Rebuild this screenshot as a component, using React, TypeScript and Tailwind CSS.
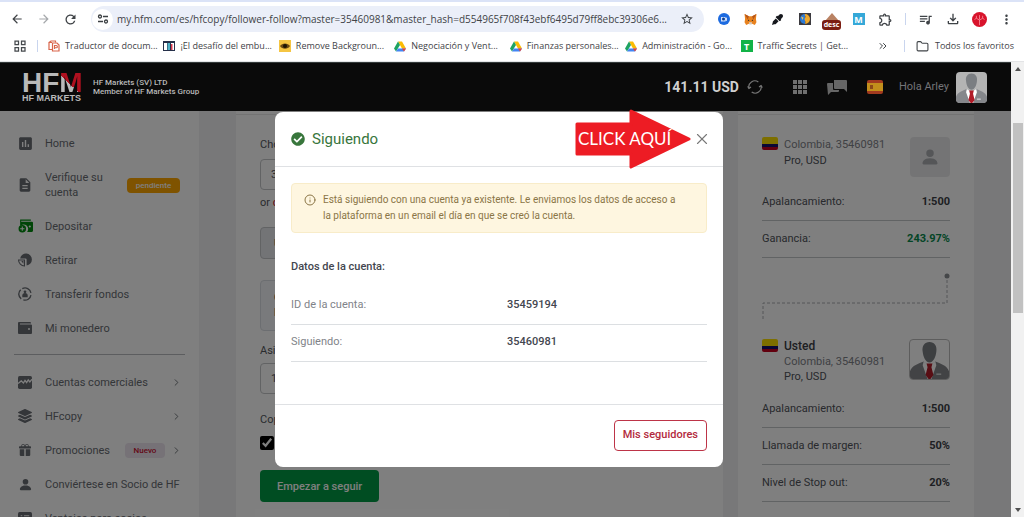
import type { ReactNode } from 'react'
import { ChevronRight, ChevronsRight, Folder, Info, X } from 'lucide-react'
import { BsGiftFill, BsPersonFill } from 'react-icons/bs'
import { FaCheckCircle, FaEyeDropper, FaLayerGroup } from 'react-icons/fa'
import {
  MdArrowBack,
  MdArrowForward,
  MdAssessment,
  MdDescription,
  MdMoreVert,
  MdOutlineExtension,
  MdOutlineFileDownload,
  MdQueueMusic,
  MdRefresh,
  MdStarBorder,
} from 'react-icons/md'

/* ---------- browser icons ---------- */

function DriveIcon() {
  return (
    <svg viewBox="0 0 24 22" className="h-[11px] w-3">
      <path d="M8 1h8l8 14h-8z" fill="#fbbc04" />
      <path d="M8 1 0 15l4 6 8-13z" fill="#1ea362" />
      <path d="M4 21h16l4-6H8z" fill="#4285f4" />
      <path d="M16 15h8l-4 6z" fill="#ea4335" />
    </svg>
  )
}

function TranslatorIcon() {
  return (
    <svg viewBox="0 0 24 24" className="size-3" fill="none" stroke="#d9654a" strokeWidth="2.4">
      <path d="M8 5H2v14h6M2 5l4-3h9v3" />
      <path d="M9 6h9l4 4v12H9z" />
      <path d="M13 18v-7h3.500a2 2 0 0 1 0 4.500H13" />
    </svg>
  )
}

function FlagBookIcon() {
  return (
    <svg viewBox="0 0 24 20" className="h-[10px] w-3">
      <path d="M0 0h24v20H0z" fill="#26304a" />
      <path d="M2 4h6v14H2z" fill="#fff" />
      <path d="M9 4h5v14H9z" fill="#4fb3c8" />
      <path d="M16 4h6v14h-6z" fill="#fff" />
      <path d="M16 6h3v12h-3z" fill="#d8364a" />
    </svg>
  )
}

function EyeIcon() {
  return (
    <svg viewBox="0 0 24 24" className="size-3">
      <path d="M0 0h24v24H0z" fill="#f5c542" />
      <path d="M2 12c4-7 16-7 20 0-4 7-16 7-20 0z" fill="#6b4a12" />
      <circle cx="12" cy="12" r="4" fill="#1c1403" />
    </svg>
  )
}

function GreenTIcon() {
  return (
    <span className="flex size-3 items-center justify-center bg-[#12b347] text-[9px] leading-none font-bold text-white">T</span>
  )
}

function TuneIcon() {
  return (
    <svg viewBox="0 0 24 24" className="size-3" fill="none" stroke="#3c4043" strokeWidth="2.600">
      <circle cx="6" cy="7" r="3" />
      <path d="M12 7h10M2 17h10" />
      <circle cx="18" cy="17" r="3" />
    </svg>
  )
}

function AppsIcon() {
  return (
    <svg viewBox="0 0 24 24" className="size-3" fill="none" stroke="#45494d" strokeWidth="2.500">
      <path d="M2 2h7v7H2zM15 2h7v7h-7zM2 15h7v7H2zM15 15h7v7h-7z" />
    </svg>
  )
}

function FoxIcon() {
  return (
    <svg viewBox="0 0 24 24" className="size-[13px]">
      <path d="M1 2l8 4h6l8-4-1 9 1 6-3 5-5-2h-6l-5 2-3-5 1-6z" fill="#e8821e" />
      <path d="M1 2l8 4-2 6zM23 2l-8 4 2 6z" fill="#b4541a" />
      <path d="M8 12l2 2-3 1zM16 12l-2 2 3 1z" fill="#2b2b2b" />
      <path d="M9 17h6l-1 4h-4z" fill="#d9cbbd" />
    </svg>
  )
}

function CameraIcon() {
  return (
    <svg viewBox="0 0 24 24" className="size-3">
      <circle cx="12" cy="12" r="12" fill="#1d6be0" />
      <path d="M6 8h9v2l3-1v7l-3-1v2H6z" fill="#cfe0fb" />
      <circle cx="11" cy="12" r="3" fill="#0e3f94" />
    </svg>
  )
}

function GlobeIcon() {
  return (
    <svg viewBox="0 0 24 24" className="size-3">
      <path d="M0 0h24v24H0z" fill="#3b3a3f" />
      <path d="M12 2a10 10 0 0 0 0 20z" fill="#2c7ad6" />
      <path d="M12 2a10 10 0 0 1 0 20c3-6-3-8 0-12s-2-5 0-8z" fill="#f0a92c" />
      <path d="M4 7l5 2-2 5z" fill="#e9c45a" />
    </svg>
  )
}

function DescIcon() {
  return (
    <span className="flex w-[19px] flex-col items-center pt-1">
      <svg viewBox="0 0 18 8" className="h-[7px] w-4">
        <path d="M9 0l7 8H2z" fill="#b98263" />
      </svg>
      <span className="w-full rounded-[3px] bg-[#7b1d12] text-center text-[7px] leading-[10px] font-bold text-white">desc</span>
    </span>
  )
}

function MIcon() {
  return (
    <span className="flex size-3 items-center justify-center bg-[#35a8d8] text-[9px] leading-none font-bold text-white">M</span>
  )
}

function ProfileIcon() {
  return (
    <svg viewBox="0 0 24 24" className="size-[15px]">
      <circle cx="12" cy="12" r="12" fill="#d8142c" />
      <path
        d="M12 21v-8M12 13l-5-3M12 13l5-3M12 12V5M7 10l-3 2M7 10V6M17 10l3 2M17 10V6"
        fill="none"
        stroke="#ff9aa6"
        strokeWidth="1.200"
      />
    </svg>
  )
}

const EXTENSIONS = [
  { name: 'Grabadora', icon: <CameraIcon /> },
  { name: 'MetaMask', icon: <FoxIcon /> },
  { name: 'Selector de color', icon: <FaEyeDropper className="size-[11px] text-[#16181d]" /> },
  { name: 'Traductor', icon: <GlobeIcon /> },
  { name: 'Descuentos', icon: <DescIcon /> },
  { name: 'Mail', icon: <MIcon /> },
  { name: 'Extensiones', icon: <MdOutlineExtension className="size-[15px]" /> },
]

const BOOKMARKS = [
  { label: 'Traductor de docum...', icon: <TranslatorIcon /> },
  { label: '¡El desafío del embu...', icon: <FlagBookIcon /> },
  { label: 'Remove Backgroun...', icon: <EyeIcon /> },
  { label: 'Negociación y Vent...', icon: <DriveIcon /> },
  { label: 'Finanzas personales...', icon: <DriveIcon /> },
  { label: 'Administración - Go...', icon: <DriveIcon /> },
  { label: 'Traffic Secrets | Get...', icon: <GreenTIcon /> },
]

function ToolButton({ label, children }: { label: string; children: ReactNode }) {
  return (
    <button type="button" aria-label={label} className="flex h-6 w-[27px] shrink-0 items-center justify-center">
      {children}
    </button>
  )
}

function BrowserBar() {
  return (
    <div className="shrink-0 border-t-2 border-b border-t-[#dbe3f7] border-b-[#e3e4e6] bg-white font-['Open_Sans','Noto_Sans',sans-serif] text-[#3f4347]">
      <div className="flex h-[34px] items-center pr-1 pl-[3px]">
        <ToolButton label="Atrás">
          <MdArrowBack className="size-[14px]" />
        </ToolButton>
        <ToolButton label="Adelante">
          <MdArrowForward className="size-[14px] text-[#a5a8ab]" />
        </ToolButton>
        <ToolButton label="Recargar">
          <MdRefresh className="size-[15px]" />
        </ToolButton>
        <div className="ml-[7px] flex h-[26px] min-w-0 flex-1 items-center rounded-full bg-[#ebeff9] pr-1 pl-px">
          <button type="button" aria-label="Información del sitio" className="flex size-[21px] items-center justify-center rounded-full bg-white">
            <TuneIcon />
          </button>
          <input
            aria-label="Dirección"
            readOnly
            className="ml-1 min-w-0 flex-1 bg-transparent text-[10px] outline-none"
            defaultValue="my.hfm.com/es/hfcopy/follower-follow?master=35460981&master_hash=d554965f708f43ebf6495d79ff8ebc39306e6..."
          />
          <ToolButton label="Añadir a favoritos">
            <MdStarBorder className="size-[14px]" />
          </ToolButton>
        </div>
        <div className="ml-[6px] flex items-center">
          {EXTENSIONS.map((ext) => (
            <ToolButton key={ext.name} label={ext.name}>
              {ext.icon}
            </ToolButton>
          ))}
        </div>
        <span className="mx-[6px] h-3 w-px bg-[#c9d5ee]" />
        <ToolButton label="Multimedia">
          <MdQueueMusic className="size-[15px]" />
        </ToolButton>
        <ToolButton label="Descargas">
          <MdOutlineFileDownload className="size-4" />
        </ToolButton>
        <ToolButton label="Perfil">
          <ProfileIcon />
        </ToolButton>
        <ToolButton label="Menú">
          <MdMoreVert className="size-[15px]" />
        </ToolButton>
      </div>

      <div className="flex h-[25px] items-center pb-[5px] pl-[14px] text-[9px]">
        <AppsIcon />
        <span className="mr-[10px] ml-[11px] h-3 w-px bg-[#c9d5ee]" />
        <div className="grid w-[808px] grid-cols-7">
          {BOOKMARKS.map((item) => (
            <a key={item.label} href="#" className="flex items-center gap-[5px] whitespace-nowrap">
              {item.icon}
              {item.label}
            </a>
          ))}
        </div>
        <div className="ml-auto flex items-center pr-[10px] whitespace-nowrap">
          <ChevronsRight className="mr-1 size-3" />
          <span className="mr-[11px] ml-[11px] h-3 w-px bg-[#c9d5ee]" />
          <a href="#" className="flex items-center gap-[6px]">
            <Folder className="size-[13px]" />
            Todos los favoritos
          </a>
        </div>
      </div>
    </div>
  )
}

/* ---------- site pieces ---------- */

function SuitAvatar() {
  return (
    <svg viewBox="0 0 40 40" className="size-full">
      <path d="M0 40V32c2-6 9-8 14-10l6 5 6-5c5 2 12 4 14 10v8z" fill="#85878b" />
      <path d="M14 22l6 4 6-4 1 4-5 14h-4l-5-14z" fill="#fff" />
      <path d="M17 24h6l-1 4 2 8-3 4h-2l-3-4 2-8z" fill="#b11c28" />
      <path d="M20 2c5 0 8 4 7 10-.5 5-3 11-7 11s-6.500-6-7-11c-1-6 2-10 7-10z" fill="#7b7e82" />
      <path d="M27 35h5" stroke="#fff" strokeWidth="1" />
    </svg>
  )
}

function ColombiaFlag() {
  return (
    <svg viewBox="0 0 16 13" className="h-[13px] w-4 shrink-0">
      <path d="M0 2a2 2 0 0 1 2-2h12a2 2 0 0 1 2 2v5H0z" fill="#fbdf00" />
      <path d="M0 7h16v3H0z" fill="#14106b" />
      <path d="M0 10h16v1a2 2 0 0 1-2 2H2a2 2 0 0 1-2-2z" fill="#c4001f" />
    </svg>
  )
}

function SiteHeader() {
  return (
    <header className="flex h-[49px] shrink-0 items-center border-t border-[#343a3a] bg-[#0a0a0a] pr-[24px] pl-[22px] text-[#b9b9b9]">
      <a href="#" className="w-[62px] font-['Liberation_Sans',sans-serif] font-bold whitespace-nowrap">
        <span className="flex text-[28px] leading-[22px]">
          <span>HF</span>
          <span className="bg-linear-to-tr from-[#b9b9b9] from-45% to-[#b0101f] to-45% bg-clip-text text-transparent">M</span>
        </span>
        <span className="block text-[9px] leading-[9px]">HF MARKETS</span>
      </a>
      <p className="ml-[9px] text-[8px] leading-[9px] font-medium">
        HF Markets (SV) LTD
        <br />
        Member of HF Markets Group
      </p>
      <p className="ml-auto text-[14px] font-bold text-[#d0d0d0]">141.11 USD</p>
      <button type="button" aria-label="Actualizar saldo" className="ml-[8px]">
        <svg viewBox="0 0 24 24" className="size-4" fill="none" stroke="#777" strokeWidth="1.800">
          <path d="M3 14a9 9 0 0 1 14-9.500M21 10a9 9 0 0 1-14 9.500" />
          <path d="M1 11l2 3 3-2M23 13l-2-3-3 2" />
        </svg>
      </button>
      <button type="button" aria-label="Aplicaciones" className="ml-[30px]">
        <svg viewBox="0 0 14 14" className="size-[14px]" fill="#6f6f6f">
          <path d="M0 0h4v4H0zM5 0h4v4H5zM10 0h4v4h-4zM0 5h4v4H0zM5 5h4v4H5zM10 5h4v4h-4zM0 10h4v4H0zM5 10h4v4H5zM10 10h4v4h-4z" />
        </svg>
      </button>
      <button type="button" aria-label="Chat" className="ml-[20px]">
        <svg viewBox="0 0 20 15" className="h-[15px] w-5" fill="#666">
          <path d="M7 0h12a1 1 0 0 1 1 1v11l-3-3H8a1 1 0 0 1-1-1z" />
          <path d="M0 4a1 1 0 0 1 1-1h5v6a1 1 0 0 0 1 1h5v1a1 1 0 0 1-1 1H4l-3 3z" />
        </svg>
      </button>
      <button type="button" aria-label="Idioma" className="ml-[20px]">
        <svg viewBox="0 0 16 14" className="h-[14px] w-4">
          <rect width="16" height="14" rx="2" fill="#a23a1f" />
          <path d="M0 3h16v8H0z" fill="#c28f1c" />
          <path d="M3 5h3v4H3z" fill="#8d4a1a" />
        </svg>
      </button>
      <span className="ml-[16px] text-[11px] text-[#747478]">Hola Arley</span>
      <span className="ml-[7px] size-[31px] overflow-hidden rounded-[4px] bg-[#b4b4b4]">
        <SuitAvatar />
      </span>
    </header>
  )
}

function DepositIcon() {
  return (
    <svg viewBox="0 0 28 26" className="h-[14px] w-[15px] text-[#008a0e]" fill="currentColor">
      <path d="M4 1h20v2H6v2h20a2 2 0 0 1 2 2v15a2 2 0 0 1-2 2H17a8.500 8.500 0 0 0-13-11V3z" />
      <circle cx="22" cy="14" r="2" fill="#fff" />
      <path fillRule="evenodd" d="M8 11a7 7 0 1 1 0 14 7 7 0 0 1 0-14zm-1 3v3H4v2h3v3h2v-3h3v-2H9v-3z" />
    </svg>
  )
}

function WithdrawIcon() {
  return (
    <svg viewBox="0 0 26 26" className="size-[14px]" fill="currentColor">
      <path d="M4 10A11 11 0 1 1 16 23V12a2 2 0 0 0-2-2z" />
      <path d="M1 13h11v11C6 24 1 19 1 13z" fill="none" stroke="currentColor" strokeWidth="2" />
      <path d="M6 15h4v5z" />
    </svg>
  )
}

function TransferIcon() {
  return (
    <svg viewBox="0 0 26 26" className="size-[14px]" fill="none" stroke="currentColor" strokeWidth="2.500">
      <path d="M8 3a11 11 0 0 1 16 8M24 15a11 11 0 0 1-14 9M6 22A11 11 0 0 1 5 5" />
      <circle cx="13" cy="9" r="2.500" fill="currentColor" stroke="none" />
      <path d="M8 19v-3a5 5 0 0 1 10 0v3z" fill="currentColor" stroke="none" />
    </svg>
  )
}

function WalletIcon() {
  return (
    <svg viewBox="0 0 28 24" className="h-3 w-[14px]" fill="currentColor">
      <path d="M2 0h22a2 2 0 0 1 2 2v1H4v2h22a2 2 0 0 1 2 2v15a2 2 0 0 1-2 2H2a2 2 0 0 1-2-2V2a2 2 0 0 1 2-2z" />
      <circle cx="22" cy="14" r="2" fill="#fff" />
    </svg>
  )
}

function AccountsIcon() {
  return (
    <svg viewBox="0 0 26 24" className="h-[13px] w-[14px]">
      <rect width="26" height="24" rx="3" fill="currentColor" />
      <path d="M0 14l6-5 4 4 3-5 3 4 3-5 3 4 4-5" fill="none" stroke="#fff" strokeWidth="2.400" />
    </svg>
  )
}

function ListIcon() {
  return (
    <svg viewBox="0 0 26 24" className="h-[13px] w-[14px]">
      <rect width="26" height="24" rx="3" fill="currentColor" />
      <path d="M5 7h3M11 7h10M5 12h3M11 12h10M5 17h3M11 17h10" stroke="#fff" strokeWidth="2" />
    </svg>
  )
}

type NavItem = { label: string; icon: ReactNode; badge?: ReactNode; arrow?: boolean }

const ACCOUNT_NAV: NavItem[] = [
  { label: 'Home', icon: <MdAssessment className="size-[17px]" /> },
  {
    label: 'Verifique su cuenta',
    icon: <MdDescription className="size-4" />,
    badge: <span className="w-[53px] rounded-[4px] bg-[#ffa600] text-center text-[8px] leading-[15px] font-medium text-white">pendiente</span>,
  },
  { label: 'Depositar', icon: <DepositIcon /> },
  { label: 'Retirar', icon: <WithdrawIcon /> },
  { label: 'Transferir fondos', icon: <TransferIcon /> },
  { label: 'Mi monedero', icon: <WalletIcon /> },
]

const SERVICES_NAV: NavItem[] = [
  { label: 'Cuentas comerciales', icon: <AccountsIcon />, arrow: true },
  { label: 'HFcopy', icon: <FaLayerGroup className="size-[14px]" />, arrow: true },
  {
    label: 'Promociones',
    icon: <BsGiftFill className="size-3" />,
    badge: <span className="mr-[6px] w-10 rounded-[4px] bg-[#ece4ee] text-center text-[8px] leading-[15px] font-medium text-[#c8102e]">Nuevo</span>,
    arrow: true,
  },
  { label: 'Conviértese en Socio de HF', icon: <BsPersonFill className="size-[15px]" /> },
  { label: 'Ventajas para socios', icon: <ListIcon /> },
]

function NavList({ items }: { items: NavItem[] }) {
  return (
    <ul>
      {items.map((item) => (
        <li key={item.label}>
          <a href="#" className="flex min-h-[34px] items-center py-[9px] text-[11px] leading-[15px]">
            <span className="flex w-[31px] shrink-0 justify-center pr-[9px]">{item.icon}</span>
            <span className={item.arrow || item.badge ? 'min-w-0 flex-1 pr-4' : 'whitespace-nowrap'}>{item.label}</span>
            {item.badge}
            {item.arrow && <ChevronRight className="mr-[2px] size-[11px]" />}
          </a>
        </li>
      ))}
    </ul>
  )
}

function Sidebar() {
  return (
    <nav className="w-[199px] shrink-0 bg-white px-[14px] pt-[15px] text-[#686c72]">
      <div className="pr-[5px]">
        <NavList items={ACCOUNT_NAV} />
      </div>
      <hr className="mt-[9px] mb-[10px] border-[#b9bbbe]" />
      <div className="pr-[1px]">
        <NavList items={SERVICES_NAV} />
      </div>
    </nav>
  )
}

function FollowForm() {
  return (
    <form className="min-w-0 flex-1 bg-white px-6 text-[11px] leading-[15px] text-[#55585d]">
      <div className="-mx-6 mb-[22px] h-1 border-b border-[#e6e6e6]" />
      <label htmlFor="account" className="block">
        Choose
      </label>
      <select id="account" className="mt-[7px] block h-[31px] w-full appearance-none rounded-[4px] border border-[#c4c6c9] px-[10px]">
        <option>35459194</option>
      </select>
      <p className="mt-[5px]">
        or{' '}
        <a href="#" className="text-[#c8102e]">
          create
        </a>
      </p>
      <div className="mt-[17px] flex h-8 items-center rounded-[4px] border border-[#c4c6c9] bg-[#e6e8ec] px-[13px] font-bold">Usted</div>
      <div className="mt-[21px] h-[51px] rounded-[4px] border border-[#d8dce3] bg-[#f3f5f8] px-[13px] py-[9px] font-bold">
        Copia
        <br />
        Proporcional
      </div>
      <label htmlFor="ratio" className="mt-[12px] block">
        Asignar
      </label>
      <select id="ratio" className="mt-[5px] block h-[31px] w-full appearance-none rounded-[4px] border border-[#c4c6c9] px-[10px]">
        <option>100%</option>
      </select>
      <label htmlFor="copy" className="mt-[18px] block">
        Copiar
      </label>
      <input id="copy" type="checkbox" defaultChecked className="mt-[9px] block size-[14px] accent-black" />
      <button type="button" className="mt-[20px] h-8 rounded-[4px] bg-[#009a44] px-[17px] font-medium text-white">
        Empezar a seguir
      </button>
    </form>
  )
}

function StatRow({ label, value, green }: { label: string; value: string; green?: boolean }) {
  return (
    <div className="mb-[3px] flex h-[34px] items-start justify-between border-b border-[#c3c6c9] pt-[7px]">
      <dt>{label}</dt>
      <dd className={green ? 'font-bold text-[#068a4c]' : 'font-bold text-[#3c3e46]'}>{value}</dd>
    </div>
  )
}

function MasterCard() {
  return (
    <aside className="w-[236px] shrink-0 bg-white px-6 text-[11px] leading-[15px] text-[#50535a]">
      <div className="-mx-6 mb-[22px] h-1 border-b border-[#e6e6e6]" />
      <div className="flex">
        <ColombiaFlag />
        <p className="ml-[6px] flex-1 leading-4">
          <span className="text-[#7e8288]">Colombia, 35460981</span>
          <br />
          Pro, USD
        </p>
        <span className="flex size-10 items-center justify-center rounded-[4px] bg-[#e9e9eb] text-[#aaadb1]">
          <BsPersonFill className="size-5" />
        </span>
      </div>
      <dl className="mt-[10px]">
        <StatRow label="Apalancamiento:" value="1:500" />
        <StatRow label="Ganancia:" value="243.97%" green />
      </dl>
      <svg viewBox="0 0 188 52" className="mt-[14px] block h-[52px] w-full" fill="none" stroke="#a9acb0">
        <circle cx="185" cy="4" r="2.500" fill="#8b8e92" stroke="none" />
        <path d="M185 8v23H1v17" strokeDasharray="3 2" />
      </svg>
      <div className="mt-[15px] flex">
        <ColombiaFlag />
        <p className="ml-[6px] flex-1">
          <strong className="text-[12px] font-medium text-[#3c3e46]">Usted</strong>
          <br />
          <span className="text-[#7e8288]">Colombia, 35460981</span>
          <br />
          Pro, USD
        </p>
        <span className="size-[41px] overflow-hidden rounded-[4px] border border-[#bbb]">
          <SuitAvatar />
        </span>
      </div>
      <dl className="mt-[10px]">
        <StatRow label="Apalancamiento:" value="1:500" />
        <StatRow label="Llamada de margen:" value="50%" />
        <StatRow label="Nivel de Stop out:" value="20%" />
      </dl>
    </aside>
  )
}

function ClickHere() {
  return (
    <div className="absolute -top-[3px] right-8 h-[60px] w-[117px]">
      <svg viewBox="0 0 117 60" className="size-full">
        <path
          d="M3 15h54V2l58 28-58 28V45H3z"
          fill="#ed1c24"
          stroke="#ed1c24"
          strokeWidth="3"
          strokeLinejoin="round"
        />
      </svg>
      <span className="absolute inset-y-0 left-1 flex items-center font-['Lato',sans-serif] text-[17px] whitespace-nowrap text-white">
        CLICK AQUÍ
      </span>
    </div>
  )
}

function FollowingDialog() {
  return (
    <div role="dialog" aria-labelledby="dialog-title" className="relative w-[448px] rounded-[8px] bg-white">
      <div className="flex h-[55px] items-center border-b border-[#dfe1e4] px-4">
        <FaCheckCircle className="size-[14px] text-[#38763c]" />
        <h2 id="dialog-title" className="ml-[7px] text-[15px] text-[#38763c]">
          Siguiendo
        </h2>
        <button type="button" aria-label="Cerrar" className="ml-auto text-[#777]">
          <X className="-mr-1 size-[18px]" strokeWidth={1.5} />
        </button>
      </div>
      <div className="px-4 pt-4 pb-[42px] text-[11px]">
        <div className="flex rounded-[4px] border border-[#f8ecc9] bg-[#fef6e0] py-2 pr-6 pl-3 text-[10px] leading-4 text-[#8a7546]">
          <Info className="mt-[2px] mr-[7px] size-3 shrink-0" />
          <p>
            Está siguiendo con una cuenta ya existente. Le enviamos los datos de acceso a la plataforma en un email el día en que se creó la
            cuenta.
          </p>
        </div>
        <h3 className="mt-[26px] leading-[15px] font-medium text-[#43464f]">Datos de la cuenta:</h3>
        <table className="mt-[13px] w-full text-left">
          <tbody>
            <tr className="h-[37px] border-b border-[#dcdfe2]">
              <th className="w-[216px] font-normal text-[#7f8389]">ID de la cuenta:</th>
              <td className="font-medium text-[#43464f]">35459194</td>
            </tr>
            <tr className="h-[37px] border-b border-[#dcdfe2]">
              <th className="font-normal text-[#7f8389]">Siguiendo:</th>
              <td className="font-medium text-[#43464f]">35460981</td>
            </tr>
          </tbody>
        </table>
      </div>
      <div className="flex justify-end border-t border-[#dfe1e4] px-4 pt-[15px] pb-4">
        <button type="button" className="h-[31px] rounded-[4px] border border-[#bd3447] px-2 text-[11px] font-medium text-[#b32a3d]">
          Mis seguidores
        </button>
      </div>
      <ClickHere />
    </div>
  )
}

function Scrollbar() {
  return (
    <div className="flex w-[13px] shrink-0 flex-col items-center bg-[#f1f1f1] py-[5px]">
      <svg viewBox="0 0 6 4" className="h-1 w-[6px]" fill="#505050">
        <path d="M3 0l3 4H0z" />
      </svg>
      <span className="mt-[52px] h-[190px] w-[10px] bg-[#c1c1c1]" />
      <svg viewBox="0 0 6 4" className="mt-auto h-1 w-[6px]" fill="#505050">
        <path d="M3 4L0 0h6z" />
      </svg>
    </div>
  )
}

export default function App() {
  return (
    <div className="flex h-screen flex-col overflow-hidden bg-white font-['Roboto',sans-serif]">
      <BrowserBar />
      <div className="flex min-h-0 flex-1">
        <div className="flex min-w-0 flex-1 flex-col">
          <SiteHeader />
          <div className="relative min-h-0 flex-1">
            <div className="flex h-full overflow-hidden bg-[#f1f1f2] pr-[37px]">
              <Sidebar />
              <main className="ml-[37px] flex min-w-0 flex-1 gap-[15px]">
                <FollowForm />
                <MasterCard />
              </main>
            </div>
            <div className="absolute inset-0 flex items-start justify-center bg-black/50 pt-px pr-[13px]">
              <FollowingDialog />
            </div>
          </div>
        </div>
        <Scrollbar />
      </div>
    </div>
  )
}
